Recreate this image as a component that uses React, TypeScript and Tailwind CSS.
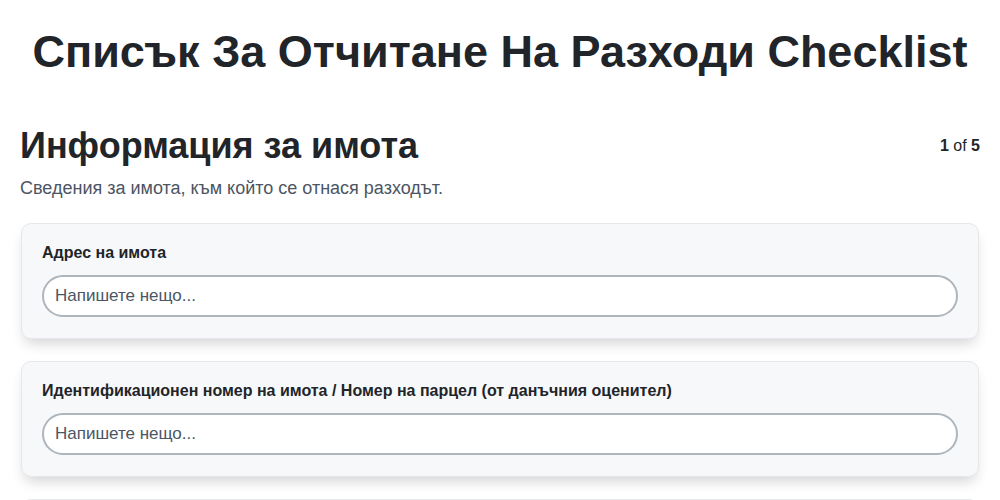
const fields = [
  { id: 'address', label: 'Адрес на имота' },
  { id: 'parcel', label: 'Идентификационен номер на имота / Номер на парцел (от данъчния оценител)' },
  { id: 'owner', label: 'Собственик на имота' },
]

export default function App() {
  return (
    <div className="min-h-screen bg-white px-5 font-['Liberation_Sans',Arial,sans-serif] text-[#212529]">
      <h1 className="pt-[26px] text-center text-[45px] leading-[52px] font-bold">
        Списък За Отчитане На Разходи Checklist
      </h1>

      <section className="pt-[46px]">
        <div className="flex items-center justify-between">
          <h2 className="text-[36px] leading-[44px] font-bold">Информация за имота</h2>
          <p className="text-[16px]">
            <span className="font-bold">1</span> of <span className="font-bold">5</span>
          </p>
        </div>
        <p className="mt-[8px] text-[18px] leading-[24px] text-[#4b5563]">
          Сведения за имота, към който се отнася разходът.
        </p>

        <div className="mt-[23px] flex flex-col gap-[22px]">
          {fields.map((f) => (
            <FieldCard key={f.id} label={f.label} />
          ))}
        </div>
      </section>
    </div>
  )
}

function FieldCard({ label }: { label: string }) {
  return (
    <div className="mx-px rounded-[10px] border border-[#e5e7eb] bg-[#f7f8fa] px-5 pt-[19px] pb-[21px] shadow-[0_8px_14px_-4px_rgba(0,0,0,0.18)]">
      <label className="block text-[16px] leading-[20px] font-bold text-[#212529]">{label}</label>
      <input
        type="text"
        placeholder="Напишете нещо..."
        className="mt-[12px] block h-[42px] w-full rounded-full border-2 border-[#adb5bd] bg-white px-[11px] text-[17px] text-[#212529] placeholder:text-[#4b5563] outline-none"
      />
    </div>
  )
}
